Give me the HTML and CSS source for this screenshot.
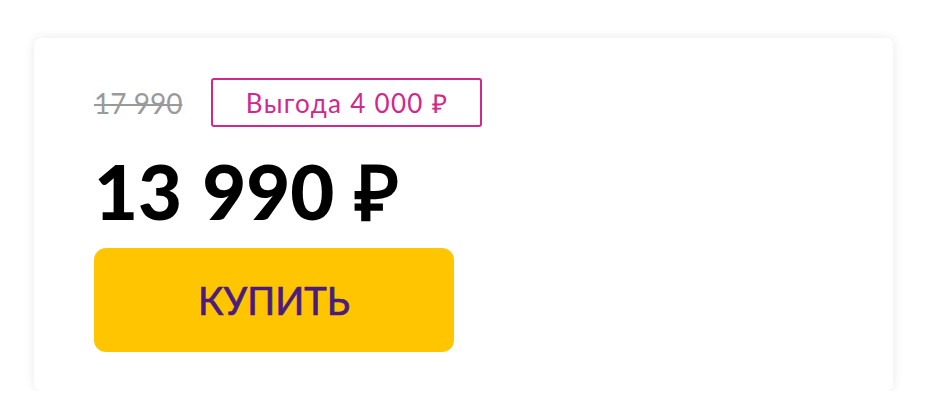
FILE: index.html
```html
<!DOCTYPE html>
<html lang="ru">
<head>
  <meta charset="UTF-8">
  <meta name="viewport" content="width=device-width, initial-scale=1.0">
  <title>Цена</title>
  <link rel="stylesheet" href="styles.css">
</head>
<body>

  <div class="card">
    <div class="price-top">
      <span class="old-price">17 990</span>
      <span class="benefit">Выгода 4 000 ₽</span>
    </div>
    <div class="price">13 990 ₽</div>
    <button class="buy" type="button">КУПИТЬ</button>
  </div>

</body>
</html>
```

FILE: styles.css
```css
body {
  background-color: #fff;
  font-family: Lato, "Open Sans", sans-serif;
  margin: 0;
  padding: 38px 41px 0 34px;
}
.card {
  background-color: #fff;
  border-radius: 7px;
  box-shadow: 0 0 12px rgba(0, 0, 0, 0.09);
  height: 353px;
  box-sizing: border-box;
  padding: 40px 60px;
}
.price-top {
  display: flex;
  align-items: center;
  gap: 29px;
}
.old-price {
  font-size: 28px;
  color: #9a9a9a;
  text-decoration: line-through;
  text-decoration-thickness: 2px;
}
.benefit {
  display: flex;
  align-items: center;
  justify-content: center;
  width: 271px;
  height: 49px;
  box-sizing: border-box;
  border: 2px solid #d1288c;
  border-radius: 3px;
  color: #d1288c;
  font-size: 26px;
  letter-spacing: 1.3px;
}
.price {
  margin-top: 24px;
  font-size: 76px;
  font-weight: 900;
  line-height: 80px;
  word-spacing: 2px;
  color: #000;
}
.buy {
  display: block;
  margin-top: 17px;
  width: 360px;
  height: 104px;
  background-color: #ffc600;
  color: #4b1b7f;
  font-family: inherit;
  font-size: 38px;
  font-weight: 400;
  -webkit-text-stroke: 0.7px #4b1b7f;
  border: none;
  border-radius: 12px;
  cursor: pointer;
}
```
